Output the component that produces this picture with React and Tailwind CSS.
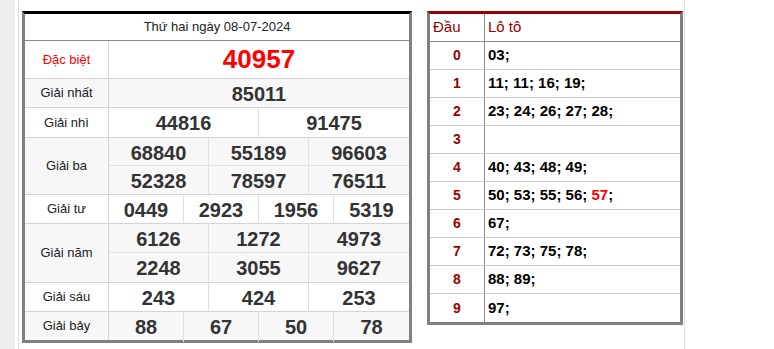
const prizes = [
  { label: 'Giải nhất', rows: [['85011']], bg: 'bg-[#f7f7f7]', h: 'h-[28px]' },
  { label: 'Giải nhì', rows: [['44816', '91475']], bg: 'bg-white', h: 'h-[29px]' },
  { label: 'Giải ba', rows: [['68840', '55189', '96603'], ['52328', '78597', '76511']], bg: 'bg-[#f7f7f7]', h: 'h-[28px]' },
  { label: 'Giải tư', rows: [['0449', '2923', '1956', '5319']], bg: 'bg-white', h: 'h-[28px]' },
  { label: 'Giải năm', rows: [['6126', '1272', '4973'], ['2248', '3055', '9627']], bg: 'bg-[#f7f7f7]', h: 'h-[29px]' },
  { label: 'Giải sáu', rows: [['243', '424', '253']], bg: 'bg-white', h: 'h-[28px]' },
  { label: 'Giải bảy', rows: [['88', '67', '50', '78']], bg: 'bg-[#f7f7f7]', h: 'h-[28px]', last: true },
]

const loto = [
  ['0', ['03']],
  ['1', ['11', '11', '16', '19']],
  ['2', ['23', '24', '26', '27', '28']],
  ['3', []],
  ['4', ['40', '43', '48', '49']],
  ['5', ['50', '53', '55', '56', '57']],
  ['6', ['67']],
  ['7', ['72', '73', '75', '78']],
  ['8', ['88', '89']],
  ['9', ['97']],
]

const gridCols = {
  1: 'grid-cols-1',
  2: 'grid-cols-2',
  3: 'grid-cols-3',
  4: 'grid-cols-4',
}

function PrizeRow({ prize }) {
  return (
    <div className={`flex ${prize.bg} ${prize.last ? '' : 'border-b border-[#d4d4d4]'}`}>
      <div className="w-[84px] shrink-0 flex items-center justify-center border-r border-[#d4d4d4] text-[13px] text-[#222]">
        {prize.label}
      </div>
      <div className="flex-1 flex flex-col">
        {prize.rows.map((nums, r) => (
          <div
            key={r}
            className={`grid ${gridCols[nums.length]} ${prize.h} ${
              r < prize.rows.length - 1 ? 'border-b border-[#e0e0e0]' : ''
            }`}
          >
            {nums.map((n, i) => (
              <div
                key={i}
                className={`flex items-center justify-center text-[20px] font-bold text-[#333] ${
                  i < nums.length - 1 ? 'border-r border-[#e0e0e0]' : ''
                }`}
              >
                {n}
              </div>
            ))}
          </div>
        ))}
      </div>
    </div>
  )
}

export default function App() {
  return (
    <div className="flex w-[774px] h-[349px] bg-white font-['Liberation_Sans',Arial,sans-serif] overflow-hidden">
      {/* side rail */}
      <div className="w-[15px] shrink-0 bg-[#eeeeee]" />
      <div className="w-[4px] shrink-0 border-r border-[#dddddd]" />

      <div className="flex items-start gap-[15px] pl-[3px] pt-[11px] border-r border-[#dddddd] w-[666px] shrink-0">
        {/* results table */}
        <div className="w-[390px] shrink-0 border-[3px] border-[#808080] border-t-black">
          <div className="h-[27px] flex items-center justify-center border-b border-[#8a8a8a] bg-white text-[13px] text-[#222]">
            Thứ hai ngày 08-07-2024
          </div>
          <div className="flex h-[38px] border-b border-[#d4d4d4] bg-white">
            <div className="w-[84px] shrink-0 flex items-center justify-center border-r border-[#d4d4d4] text-[13px] text-[#ff0000]">
              Đặc biệt
            </div>
            <div className="flex-1 flex items-center justify-center text-[26px] font-bold text-[#ff0000]">
              40957
            </div>
          </div>
          {prizes.map((p) => (
            <PrizeRow key={p.label} prize={p} />
          ))}
        </div>

        {/* loto table */}
        <div className="w-[256px] shrink-0 border-[3px] border-[#808080] border-t-[#990000] bg-white">
          <div className="flex h-[28px] border-b border-[#8a8a8a]">
            <div className="w-[55px] shrink-0 border-r border-[#8a8a8a] pl-[3px] flex items-center text-[15px] text-[#990000]">
              Đầu
            </div>
            <div className="flex-1 pl-[3px] flex items-center text-[15px] text-[#990000]">Lô tô</div>
          </div>
          {loto.map(([d, nums], idx) => (
            <div
              key={d}
              className={`flex h-[28px] ${idx < loto.length - 1 ? 'border-b border-[#cccccc]' : ''}`}
            >
              <div className="w-[55px] shrink-0 border-r border-[#8a8a8a] flex items-center justify-center text-[14px] font-bold text-[#990000]">
                {d}
              </div>
              <div className="flex-1 pl-[3px] flex items-center text-[15px] font-bold text-black whitespace-pre">
                {nums.map((n, i) => (
                  <span key={i}>
                    <span className={n === '57' ? 'text-[#ff0000]' : ''}>{n}</span>
                    {'; '}
                  </span>
                ))}
              </div>
            </div>
          ))}
        </div>
      </div>
      <div className="flex-1" />
    </div>
  )
}
